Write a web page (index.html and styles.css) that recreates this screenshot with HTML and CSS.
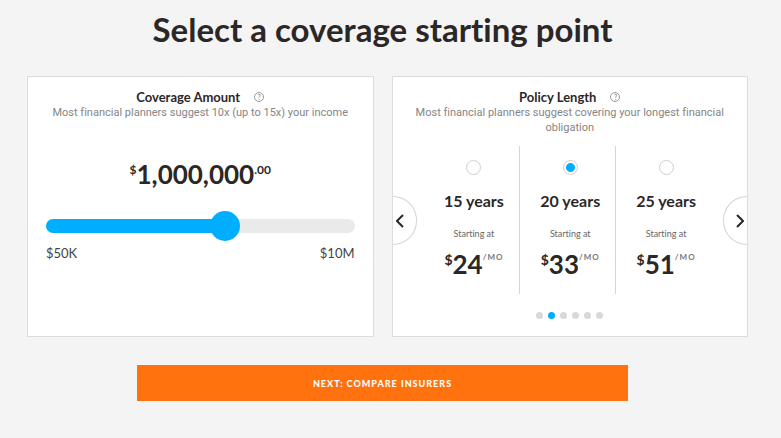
FILE: index.html
```html
<!DOCTYPE html>
<html lang="en">
<head>
<meta charset="utf-8">
<meta name="viewport" content="width=device-width, initial-scale=1">
<title>Select a coverage starting point</title>
<link rel="stylesheet" href="styles.css">
</head>
<body>
<main class="page">
  <h1 class="title">Select a coverage starting point</h1>
  <form class="quote">
    <div class="cards">
      <section class="card">
        <header class="card-head">
          <h2 class="card-title"><label for="amount">Coverage Amount</label>
            <button class="help" type="button" aria-label="About coverage amount">?</button></h2>
          <p class="hint">Most financial planners suggest 10x (up to 15x) your income</p>
        </header>
        <output class="amount" for="amount"><sup class="mark">$</sup>1,000,000<sup class="mark">.00</sup></output>
        <input class="slider" id="amount" type="range" min="0" max="100" value="59" aria-valuetext="$1,000,000">
        <div class="range"><span>$50K</span><span>$10M</span></div>
      </section>
      <section class="card">
        <header class="card-head">
          <h2 class="card-title">Policy Length
            <button class="help" type="button" aria-label="About policy length">?</button></h2>
          <p class="hint">Most financial planners suggest covering your longest financial obligation</p>
        </header>
        <div class="plans">
          <label class="plan">
            <input class="radio" type="radio" name="term" value="15">
            <span class="years">15 years</span>
            <span class="starting">Starting at</span>
            <span class="price"><sup class="currency">$</sup>24<sup class="per">/MO</sup></span>
          </label>
          <label class="plan">
            <input class="radio" type="radio" name="term" value="20" checked>
            <span class="years">20 years</span>
            <span class="starting">Starting at</span>
            <span class="price"><sup class="currency">$</sup>33<sup class="per">/MO</sup></span>
          </label>
          <label class="plan">
            <input class="radio" type="radio" name="term" value="25">
            <span class="years">25 years</span>
            <span class="starting">Starting at</span>
            <span class="price"><sup class="currency">$</sup>51<sup class="per">/MO</sup></span>
          </label>
        </div>
        <div class="dots">
          <i class="dot"></i><i class="dot dot-on"></i><i class="dot"></i><i class="dot"></i><i class="dot"></i><i class="dot"></i>
        </div>
        <button class="nav nav-prev" type="button" aria-label="Previous lengths">
          <svg width="8" height="14" viewBox="0 0 8 14"><path d="M7 1 1 7l6 6"/></svg>
        </button>
        <button class="nav nav-next" type="button" aria-label="Next lengths">
          <svg width="8" height="14" viewBox="0 0 8 14"><path d="m1 1 6 6-6 6"/></svg>
        </button>
      </section>
    </div>
    <div class="actions"><button class="next" type="submit">NEXT: COMPARE INSURERS</button></div>
  </form>
</main>
</body>
</html>
```
FILE: styles.css
```css
* { box-sizing: border-box; }

body {
  margin: 0;
  background: #f4f4f4;
  color: #2b2727;
  font-family: Lato, "Open Sans", sans-serif;
  font-variant-ligatures: none;
}

button { font-family: inherit; cursor: pointer; }

.page { padding: 8px 33px 36px 27px; }

.title {
  margin: 0 0 26px;
  padding-right: 10px;
  font-size: 33px;
  line-height: 42px;
  font-weight: 700;
  text-align: center;
}

.cards {
  display: grid;
  grid-template-columns: 347fr 357fr;
  gap: 18px;
}

.card {
  position: relative;
  padding: 12px 18px 17px;
  background: #fff;
  border: 1px solid #dcdcdc;
}

.card-head { text-align: center; }

.card-title {
  display: flex;
  justify-content: center;
  align-items: center;
  gap: 14px;
  margin: 0;
  font-size: 13px;
  line-height: 16px;
  font-weight: 700;
}

.help {
  width: 10px;
  height: 10px;
  padding: 0;
  border: 1px solid #9a9a9a;
  border-radius: 50%;
  background: none;
  color: #777;
  font-size: 7px;
  line-height: 8px;
}

.hint {
  margin: 0;
  color: #858585;
  font-family: Roboto, Lato, sans-serif;
  font-size: 11px;
  line-height: 15px;
}

.amount {
  display: flex;
  justify-content: center;
  margin-top: 38px;
  font-size: 26px;
  line-height: 32px;
  font-weight: 700;
}

.mark {
  font-size: 12px;
  line-height: 24px;
}

.slider {
  display: block;
  width: 100%;
  height: 32px;
  margin: 20px 0 0;
  appearance: none;
  background: none;
}

.slider::-webkit-slider-runnable-track {
  height: 14px;
  border-radius: 7px;
  background: linear-gradient(to right, #00aeff 58%, #eaeaea 58%);
}

.slider::-webkit-slider-thumb {
  appearance: none;
  width: 30px;
  height: 30px;
  margin-top: -8px;
  border-radius: 50%;
  background: #00aeff;
}

.range {
  display: flex;
  justify-content: space-between;
  margin-top: 3px;
  color: #444;
  font-size: 13px;
  line-height: 16px;
}

.plans {
  display: grid;
  grid-template-columns: repeat(3, 1fr);
  margin: 11px 18px 0 13px;
}

.plan {
  display: flex;
  flex-direction: column;
  align-items: center;
  height: 148px;
  padding: 14px 0 0 5px;
}

.plan + .plan { border-left: 1px solid #d4d4d4; }

.radio {
  appearance: none;
  width: 15px;
  height: 15px;
  margin: 0;
  border: 1px solid #cfcfcf;
  border-radius: 50%;
  background: #fff;
}

.radio:checked { background: radial-gradient(circle, #00aeff 4px, #fff 5px); }

.years {
  margin-top: 16px;
  font-size: 16px;
  line-height: 20px;
  font-weight: 700;
}

.starting {
  margin-top: 17px;
  color: #666;
  font-size: 9px;
  line-height: 12px;
}

.price {
  display: flex;
  margin-top: 8px;
  font-size: 26px;
  line-height: 32px;
  font-weight: 700;
}

.currency {
  font-size: 14px;
  line-height: 24px;
}

.per {
  color: #777;
  font-size: 8px;
  line-height: 18px;
  font-weight: 700;
  letter-spacing: 1px;
}

.dots {
  display: flex;
  justify-content: center;
  gap: 5px;
  margin-top: 18px;
}

.dot {
  width: 7px;
  height: 7px;
  border-radius: 50%;
  background: #d9d9d9;
}

.dot-on { background: #00aeff; }

.nav {
  position: absolute;
  top: 119px;
  display: flex;
  align-items: center;
  width: 24px;
  height: 49px;
  padding: 0;
  border: 1px solid #d4d4d4;
  background: #fff;
}

.nav svg {
  fill: none;
  stroke: #2b2727;
  stroke-width: 2;
}

.nav-prev {
  left: 0;
  padding-left: 3px;
  border-left: 0;
  border-radius: 0 25px 25px 0;
}

.nav-next {
  right: 0;
  justify-content: flex-end;
  padding-right: 3px;
  border-right: 0;
  border-radius: 25px 0 0 25px;
}

.actions { padding: 28px 120px 0 110px; }

.next {
  display: block;
  width: 100%;
  height: 36px;
  border: 0;
  background: #ff720d;
  color: #fff;
  font-size: 9px;
  font-weight: 900;
  letter-spacing: 1px;
}
```
